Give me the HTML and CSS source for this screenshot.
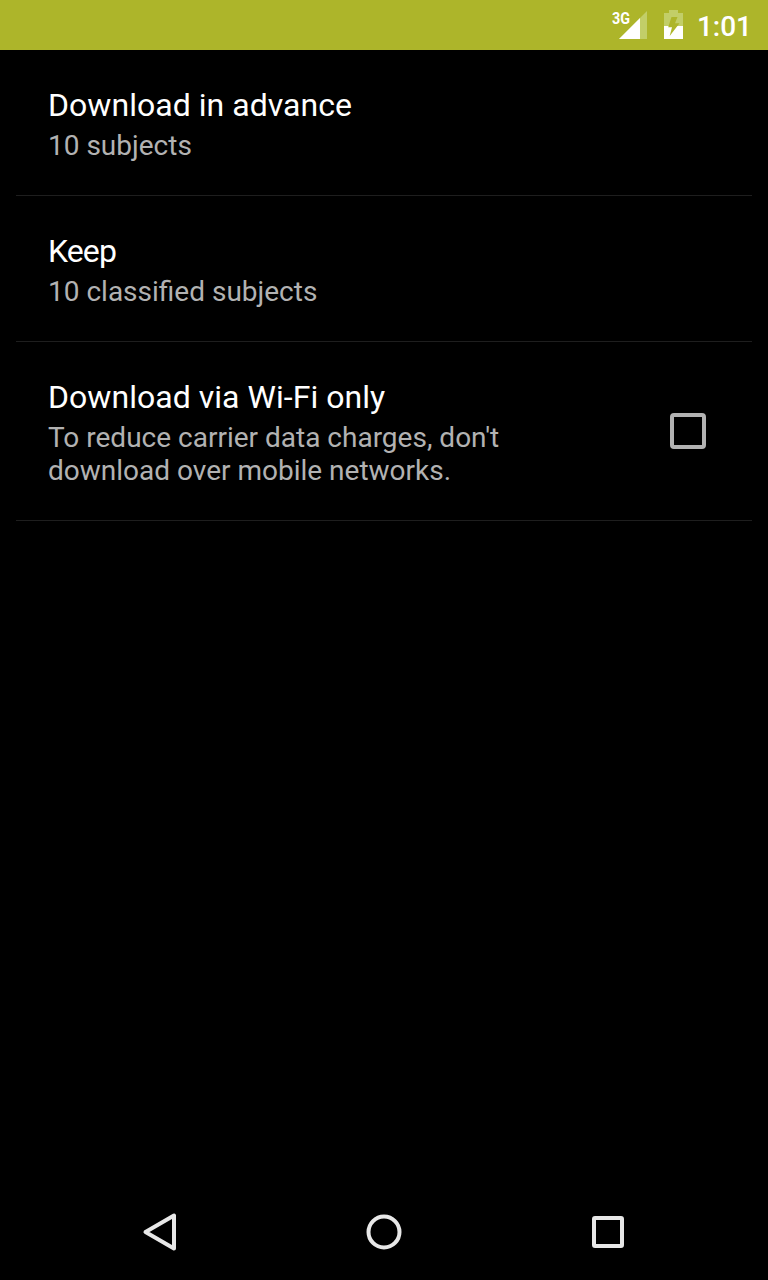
FILE: index.html
```html
<!DOCTYPE html>
<html lang="en">
<head>
<meta charset="utf-8">
<title>Settings</title>
<link rel="stylesheet" href="styles.css">
</head>
<body>
<div class="screen">
  <header class="status">
    <svg class="signal" width="36" height="30" viewBox="0 0 36 30">
      <path d="M7 29 35 1V29Z" fill="#c2ce68"/>
      <path d="M7 29 28 8V29Z" fill="#fff"/>
      <text class="network" x="0" y="13.5" textLength="18" lengthAdjust="spacingAndGlyphs">3G</text>
    </svg>
    <svg class="battery" width="19" height="30" viewBox="0 0 19 30">
      <path d="M5 0H14V3H19V16H0V3H5Z" fill="#c2ce68"/>
      <path d="M0 16H19V29H0Z" fill="#fff"/>
      <path d="M7.5 7H13.5L11 13.2H15.5L5.7 26L8 17.2H4.2Z" fill="#adb52a"/>
    </svg>
    <time class="clock">1:01</time>
  </header>
  <main class="list">
    <section class="row">
      <div class="copy"><div class="title">Download in advance</div><div class="summary">10 subjects</div></div>
    </section>
    <section class="row">
      <div class="copy"><div class="title title-tight">Keep</div><div class="summary">10 classified subjects</div></div>
    </section>
    <section class="row">
      <div class="copy"><div class="title">Download via Wi-Fi only</div><div class="summary">To reduce carrier data charges, don't download over mobile networks.</div></div>
      <span class="checkbox" role="checkbox" aria-checked="false"></span>
    </section>
  </main>
  <nav class="nav">
    <svg width="60" height="60" viewBox="0 0 60 60"><path d="M15.5 32 44 15.5V48.5Z"/></svg>
    <svg width="60" height="60" viewBox="0 0 60 60"><circle cx="30" cy="32" r="15.5"/></svg>
    <svg width="60" height="60" viewBox="0 0 60 60"><rect x="16" y="18" width="28" height="28" rx="1"/></svg>
  </nav>
</div>
</body>
</html>
```
FILE: styles.css
```css
body {
  margin: 0;
  background: #000;
  font-family: Roboto, sans-serif;
}
.screen {
  display: flex;
  flex-direction: column;
  width: 768px;
  height: 1280px;
  overflow: hidden;
}
.status {
  display: flex;
  justify-content: flex-end;
  box-sizing: border-box;
  height: 50px;
  padding: 10px 16px 0 0;
  background: #adb52a;
  color: #fff;
}
.network {
  fill: #fff;
  font-size: 16px;
  font-weight: 700;
}
.battery {
  margin-left: 16px;
}
.clock {
  margin-left: 14px;
  font-size: 28px;
  font-weight: 500;
  line-height: 33px;
}
.list {
  flex: 1;
  padding: 0 16px;
}
.row {
  display: flex;
  justify-content: space-between;
  align-items: center;
  padding: 36px 46px 33px 32px;
  border-bottom: 1px solid #1e1e1e;
}
.copy {
  max-width: 520px;
}
.title {
  margin-bottom: 5px;
  color: #fff;
  font-size: 32px;
  line-height: 38px;
  letter-spacing: 0.04px;
}
.title-tight {
  letter-spacing: -0.9px;
}
.summary {
  color: #b2b2b2;
  font-size: 28px;
  line-height: 33px;
}
.checkbox {
  box-sizing: border-box;
  width: 36px;
  height: 36px;
  margin-bottom: 4px;
  border: 4px solid #b2b2b2;
  border-radius: 4px;
}
.nav {
  display: flex;
  justify-content: space-between;
  padding: 0 130px 20px;
}
.nav svg {
  fill: none;
  stroke: #e8e8e8;
  stroke-width: 4;
  stroke-linejoin: round;
}
```
